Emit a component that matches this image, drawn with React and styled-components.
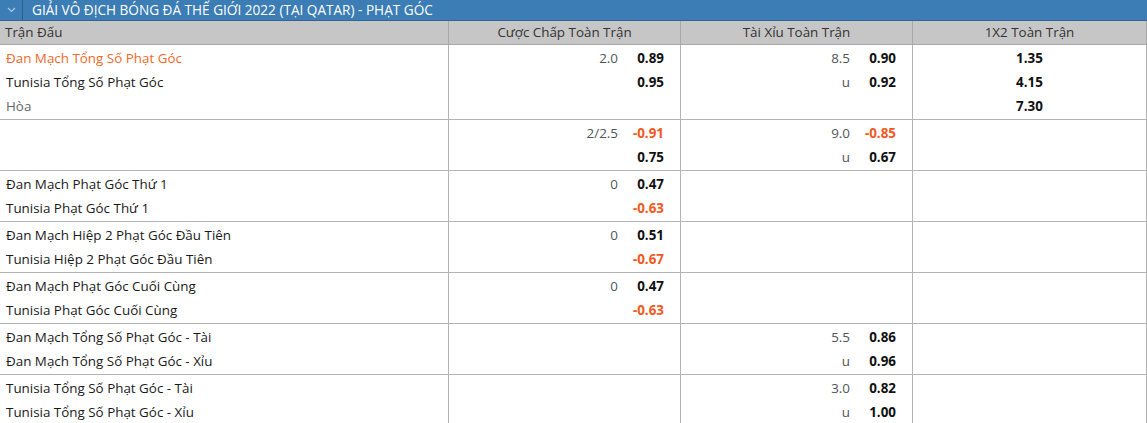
import styled, { createGlobalStyle } from 'styled-components'

const GlobalStyle = createGlobalStyle`
    body {
        margin: 0;
        background: #fff;
        font-family: "Open Sans", "Noto Sans", sans-serif;
    }
`
const Board = styled.div`
    width: 1147px;
    font-size: 13.4px;
    color: #1a1a1a;
`
const TitleBar = styled.div`
    display: flex;
    align-items: stretch;
    height: 20px;
    background: #3b7db4;
    border-bottom: 1px solid #2d6797;
`
const Toggle = styled.div`
    width: 22px;
    display: flex;
    align-items: center;
    justify-content: center;
    border-right: 1px solid #2a5f8c;
    color: #a9c8e3;
`
const Title = styled.div`
    padding-left: 9px;
    color: #fff;
    font-size: 13.6px;
    line-height: 20px;
    white-space: nowrap;
`
const Row = styled.div`
    display: grid;
    grid-template-columns: 449px 232px 232px 1fr;
    border-bottom: 1px solid #b3b3b3;
`
const HeadRow = styled(Row)`
    background: #c6c6c6;
    color: #333;
    height: 23px;
    border-bottom-color: #a8a8a8;
`
const HeadCell = styled.div`
    line-height: 23px;
    text-align: ${p => (p.$left ? 'left' : 'center')};
    padding-left: ${p => (p.$left ? '5px' : '0')};
    border-right: 1px solid #a8a8a8;
`
const Cell = styled.div`
    padding: 1px 0;
    border-right: 1px solid #b3b3b3;
`
const Line = styled.div`
    height: 24px;
    line-height: 24px;
    display: flex;
    align-items: center;
    white-space: nowrap;
`
const Name = styled(Line)`
    padding-left: 6px;
    color: ${p => (p.$tone === 'home' ? '#f0692a' : p.$tone === 'draw' ? '#626870' : '#1a1a1a')};
`
const OddsLine = styled(Line)`
    justify-content: ${p => (p.$center ? 'center' : 'flex-end')};
    padding-right: ${p => (p.$center ? '0' : '16px')};
`
const Hdp = styled.span`
    color: #50555c;
`
const Price = styled.span`
    width: ${p => (p.$free ? 'auto' : '46px')};
    text-align: right;
    font-weight: 700;
    color: ${p => (p.$neg ? '#f05a1e' : '#111')};
`

const groups = [
    {
        names: [['Đan Mạch Tổng Số Phạt Góc', 'home'], ['Tunisia Tổng Số Phạt Góc'], ['Hòa', 'draw']],
        hdp: [['2.0', '0.89'], ['', '0.95']],
        ou: [['8.5', '0.90'], ['u', '0.92']],
        x12: ['1.35', '4.15', '7.30'],
    },
    {
        names: [],
        hdp: [['2/2.5', '-0.91'], ['', '0.75']],
        ou: [['9.0', '-0.85'], ['u', '0.67']],
    },
    {
        names: [['Đan Mạch Phạt Góc Thứ 1'], ['Tunisia Phạt Góc Thứ 1']],
        hdp: [['0', '0.47'], ['', '-0.63']],
    },
    {
        names: [['Đan Mạch Hiệp 2 Phạt Góc Đầu Tiên'], ['Tunisia Hiệp 2 Phạt Góc Đầu Tiên']],
        hdp: [['0', '0.51'], ['', '-0.67']],
    },
    {
        names: [['Đan Mạch Phạt Góc Cuối Cùng'], ['Tunisia Phạt Góc Cuối Cùng']],
        hdp: [['0', '0.47'], ['', '-0.63']],
    },
    {
        names: [['Đan Mạch Tổng Số Phạt Góc - Tài'], ['Đan Mạch Tổng Số Phạt Góc - Xỉu']],
        ou: [['5.5', '0.86'], ['u', '0.96']],
    },
    {
        names: [['Tunisia Tổng Số Phạt Góc - Tài'], ['Tunisia Tổng Số Phạt Góc - Xỉu']],
        ou: [['3.0', '0.82'], ['u', '1.00']],
    },
]

function Market({ lines }) {
    if (!lines) return <Cell />
    return (
        <Cell>
            {lines.map(([hdp, price], i) => (
                <OddsLine key={i}>
                    <Hdp>{hdp}</Hdp>
                    <Price $neg={price.startsWith('-')}>{price}</Price>
                </OddsLine>
            ))}
        </Cell>
    )
}

export default function App() {
    return (
        <>
            <GlobalStyle />
            <Board>
                <TitleBar>
                    <Toggle>
                        <svg width="9" height="6" viewBox="0 0 9 6">
                            <path d="M1 1 L4.5 4.5 L8 1" fill="none" stroke="currentColor" strokeWidth="1.2" />
                        </svg>
                    </Toggle>
                    <Title>GIẢI VÔ ĐỊCH BÓNG ĐÁ THẾ GIỚI 2022 (TẠI QATAR) - PHẠT GÓC</Title>
                </TitleBar>
                <HeadRow>
                    <HeadCell $left>Trận Đấu</HeadCell>
                    <HeadCell>Cược Chấp Toàn Trận</HeadCell>
                    <HeadCell>Tài Xỉu Toàn Trận</HeadCell>
                    <HeadCell>1X2 Toàn Trận</HeadCell>
                </HeadRow>
                {groups.map((g, i) => (
                    <Row key={i}>
                        <Cell>
                            {g.names.map(([text, tone], j) => (
                                <Name key={j} $tone={tone}>{text}</Name>
                            ))}
                        </Cell>
                        <Market lines={g.hdp} />
                        <Market lines={g.ou} />
                        <Cell>
                            {g.x12 && g.x12.map((p, j) => (
                                <OddsLine key={j} $center>
                                    <Price $free>{p}</Price>
                                </OddsLine>
                            ))}
                        </Cell>
                    </Row>
                ))}
            </Board>
        </>
    )
}
